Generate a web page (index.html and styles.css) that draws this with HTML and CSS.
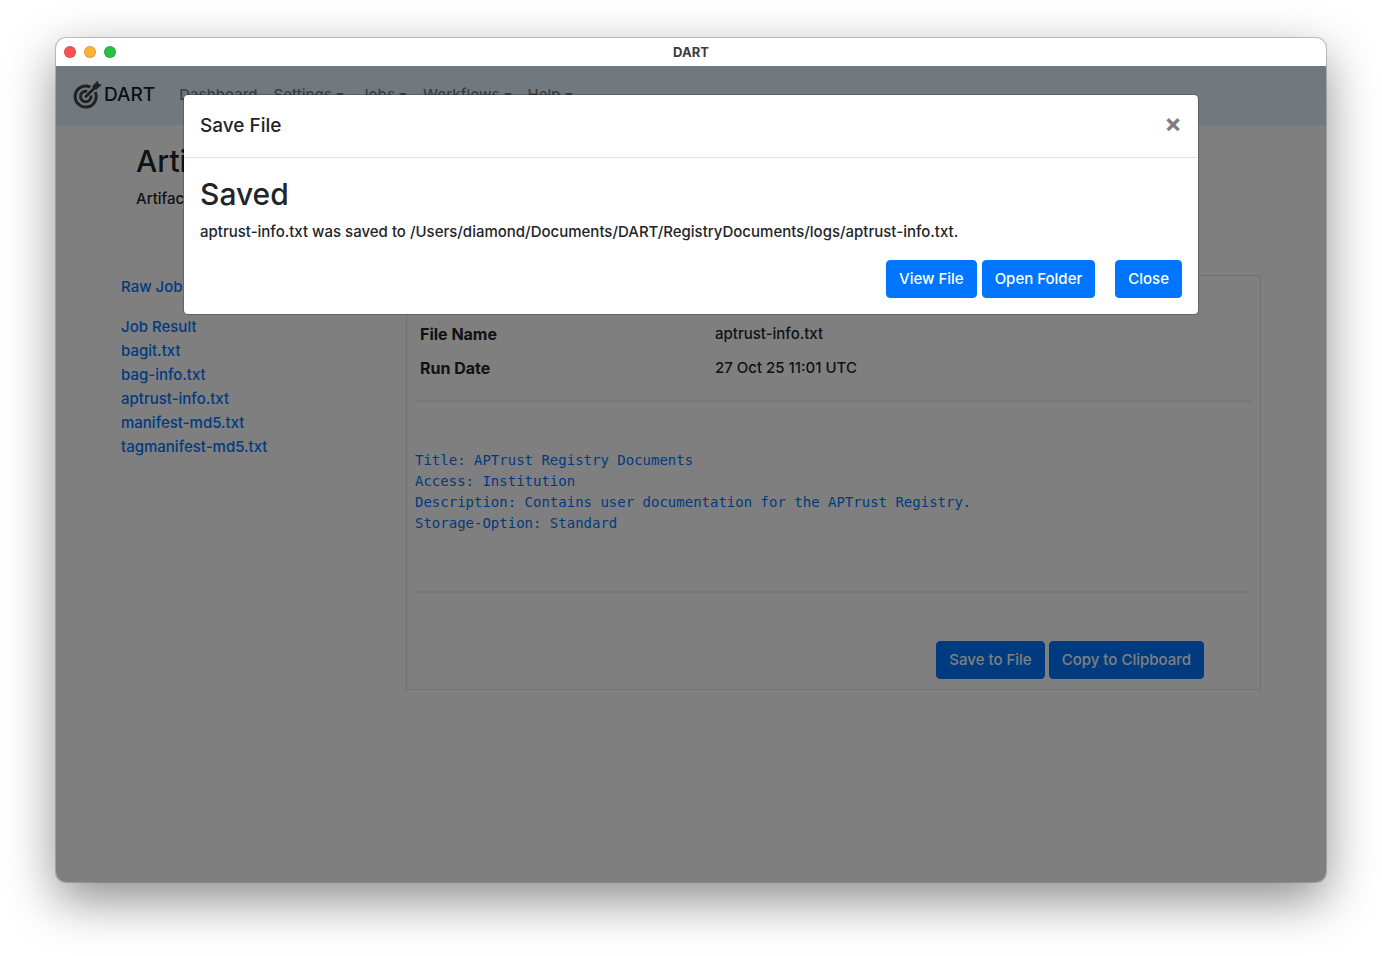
FILE: index.html
```html
<!DOCTYPE html>
<html lang="en">
  <head>
    <meta charset="UTF-8" />
    <meta name="viewport" content="width=device-width, initial-scale=1.0" />
    <title>DART</title>
    <link rel="stylesheet" href="styles.css">
  </head>

  <body>
    <div class="window">
      <div class="titlebar">
        <div class="lights">
          <span class="light red"></span>
          <span class="light yellow"></span>
          <span class="light green"></span>
        </div>
        <span class="window-title">DART</span>
      </div>

      <div class="app">
        <nav class="navbar">
          <a class="brand" href="#">
            <svg width="30" height="30" viewBox="0 0 30 30" fill="none" stroke="#444" aria-hidden="true">
              <path d="M18.4 7.2A10.5 10.5 0 1 0 23.2 12.2" stroke-width="3" />
              <path d="M15.2 11.4A5.3 5.3 0 1 0 19 15.6" stroke-width="3" />
              <path d="M13.8 16.6L23 7.4" stroke-width="2.8" stroke-linecap="round" />
              <path d="M20.5 9.5V5.8L25.6 0.8L26.6 3.8L29.8 4.8L24.6 9.5Z" fill="#444" stroke="none" />
            </svg>
            DART
          </a>
          <ul class="nav">
            <li><a href="#">Dashboard</a></li>
            <li><a class="dropdown" href="#">Settings</a></li>
            <li><a class="dropdown" href="#">Jobs</a></li>
            <li><a class="dropdown" href="#">Workflows</a></li>
            <li><a class="dropdown" href="#">Help</a></li>
          </ul>
        </nav>

        <main class="container">
          <header class="page-header">
            <h2>Artifacts</h2>
            <p>Artifacts</p>
          </header>

          <div class="row">
            <aside class="files">
              <p><a href="#">Raw Job</a></p>
              <ul>
                <li><a href="#">Job Result</a></li>
                <li><a href="#">bagit.txt</a></li>
                <li><a href="#">bag-info.txt</a></li>
                <li><a href="#">aptrust-info.txt</a></li>
                <li><a href="#">manifest-md5.txt</a></li>
                <li><a href="#">tagmanifest-md5.txt</a></li>
              </ul>
            </aside>

            <section class="artifact">
              <table>
                <tr>
                  <th scope="row">File Name</th>
                  <td>aptrust-info.txt</td>
                </tr>
                <tr>
                  <th scope="row">Run Date</th>
                  <td>27 Oct 25 11:01 UTC</td>
                </tr>
              </table>
              <hr />
              <pre>Title: APTrust Registry Documents
Access: Institution
Description: Contains user documentation for the APTrust Registry.
Storage-Option: Standard</pre>
              <hr />
              <div class="actions">
                <button type="button" class="btn">Save to File</button>
                <button type="button" class="btn">Copy to Clipboard</button>
              </div>
            </section>
          </div>
        </main>

        <div class="backdrop">
          <div class="modal" role="dialog" aria-labelledby="modal-title">
            <div class="modal-header">
              <h5 id="modal-title">Save File</h5>
              <button type="button" class="close" aria-label="Close">&times;</button>
            </div>
            <div class="modal-body">
              <h2>Saved</h2>
              <p>aptrust-info.txt was saved to /Users/diamond/Documents/DART/RegistryDocuments/logs/aptrust-info.txt.</p>
              <div class="modal-buttons">
                <button type="button" class="btn">View File</button>
                <button type="button" class="btn">Open Folder</button>
                <button type="button" class="btn btn-close">Close</button>
              </div>
            </div>
          </div>
        </div>
      </div>
    </div>
  </body>
</html>
```
FILE: styles.css
```css
* {
  margin: 0;
  padding: 0;
  box-sizing: border-box;
}

body {
  min-height: 100vh;
  padding: 38px 56px 74px;
  display: flex;
  background: #fff;
  color: #212529;
  font-family: Inter, "Liberation Sans", sans-serif;
  font-size: 15px;
  font-weight: 450;
  line-height: 24px;
}

a {
  color: #0076ff;
  text-decoration: none;
}

ul {
  list-style: none;
}

h2 {
  font-size: 30px;
  font-weight: 550;
  line-height: 40px;
  margin-bottom: 6px;
}

.window {
  flex: 1;
  display: flex;
  flex-direction: column;
  border-radius: 10px;
  overflow: hidden;
  background: #fff;
  box-shadow: 0 0 0 1px rgba(0, 0, 0, 0.2), 0 18px 50px rgba(0, 0, 0, 0.45);
}

.titlebar {
  display: grid;
  grid-template-columns: 1fr auto 1fr;
  align-items: center;
  height: 28px;
  padding: 0 8px;
}

.lights {
  display: flex;
  gap: 8px;
}

.light {
  width: 12px;
  height: 12px;
  border-radius: 50%;
  border: 1px solid rgba(0, 0, 0, 0.12);
}

.red {
  background: #ff5250;
}

.yellow {
  background: #ffb236;
}

.green {
  background: #28c13f;
}

.window-title {
  font-size: 13px;
  font-weight: 700;
  color: #3c3c3c;
}

.app {
  position: relative;
  flex: 1;
}

.navbar {
  display: flex;
  align-items: center;
  height: 59px;
  padding: 0 16px 2px;
  background: #e3f2fd;
}

.brand {
  display: flex;
  align-items: center;
  gap: 2px;
  margin-right: 16px;
  font-size: 19px;
  color: rgba(0, 0, 0, 0.9);
}

.nav {
  display: flex;
}

.nav a {
  display: block;
  padding: 8px;
  color: rgba(0, 0, 0, 0.5);
}

.dropdown::after {
  content: "";
  display: inline-block;
  margin-left: 4px;
  vertical-align: 3px;
  border-top: 4px solid;
  border-left: 4px solid transparent;
  border-right: 4px solid transparent;
}

.container {
  max-width: 1140px;
  margin: 0 auto;
  padding: 16px 0;
}

.page-header {
  padding: 0 15px;
  margin-bottom: 64px;
}

.row {
  display: grid;
  grid-template-columns: 1fr 3fr;
  align-items: start;
}

.files p {
  margin-bottom: 16px;
}

.artifact {
  padding: 41px 8px 10px;
  border: 1px solid #dee2e6;
}

table {
  width: 100%;
  border-collapse: collapse;
  table-layout: fixed;
}

th,
td {
  padding: 5px;
  text-align: left;
}

th {
  width: 295px;
  font-size: 16px;
}

hr {
  border: 0;
  height: 2px;
  margin: 15px 0 48px;
  background: rgba(0, 0, 0, 0.06);
}

pre {
  margin-bottom: 57px;
  color: #0076ff;
  font-family: "DejaVu Sans Mono", monospace;
  font-size: 14px;
  line-height: 21px;
  overflow: auto;
}

.actions {
  display: flex;
  justify-content: flex-end;
  gap: 4px;
  padding-right: 48px;
}

.btn {
  padding: 6px 12px;
  border: 1px solid #0076ff;
  border-radius: 4px;
  background: #0076ff;
  color: #fff;
  font: inherit;
  font-weight: 500;
  cursor: pointer;
}

/* covers the page but not the title bar */
.backdrop {
  position: absolute;
  inset: 0;
  padding-top: 28px;
  background: rgba(0, 0, 0, 0.5);
}

.modal {
  width: 80%;
  margin: 0 auto;
  border: 1px solid rgba(0, 0, 0, 0.2);
  border-radius: 5px;
  background: #fff;
  background-clip: padding-box;
}

.modal-header {
  display: flex;
  align-items: flex-start;
  justify-content: space-between;
  padding: 16px;
  border-bottom: 1px solid #dee2e6;
}

.modal-header h5 {
  font-size: 19px;
  font-weight: 500;
  line-height: 30px;
}

.close {
  border: 0;
  background: none;
  color: #000;
  font: inherit;
  font-size: 26px;
  font-weight: 700;
  line-height: 26px;
  opacity: 0.5;
  cursor: pointer;
}

.modal-body {
  padding: 16px;
}

.modal-body p {
  margin-bottom: 16px;
}

.modal-buttons {
  display: flex;
  justify-content: flex-end;
  gap: 5px;
}

.btn-close {
  margin-left: 15px;
}
```
